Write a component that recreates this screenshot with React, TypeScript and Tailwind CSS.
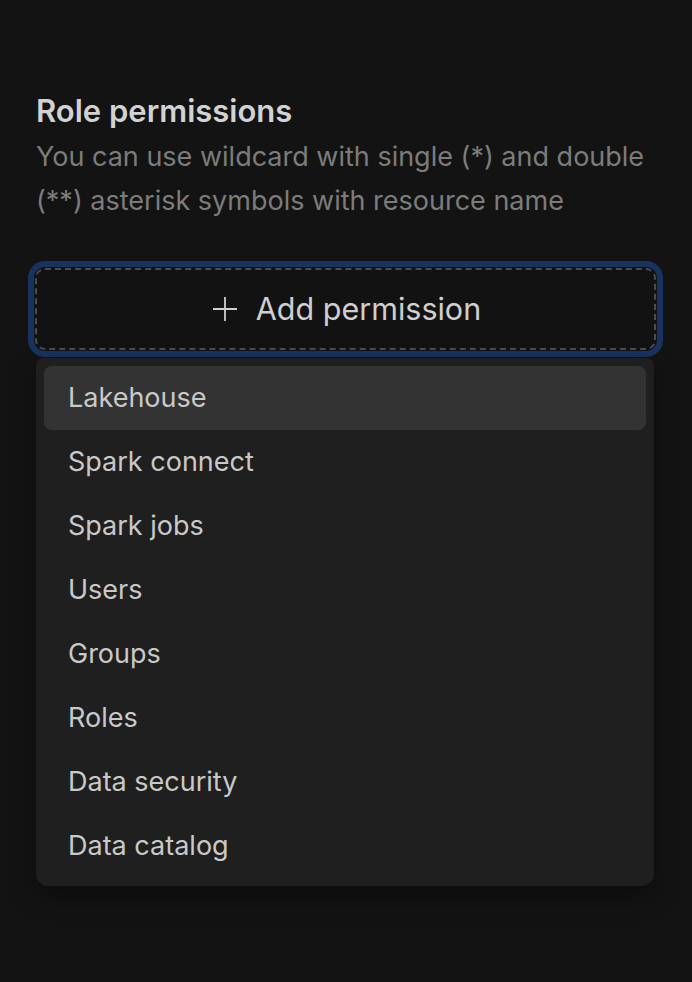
import React from 'react';

const items = [
  'Lakehouse',
  'Spark connect',
  'Spark jobs',
  'Users',
  'Groups',
  'Roles',
  'Data security',
  'Data catalog',
];

const App: React.FC = () => {
  return (
    <div className="min-h-[982px] w-full bg-[#131313] px-9 pt-[88px] font-['Inter',sans-serif]">
      <h2 className="text-[31px] leading-[46px] font-semibold text-[#d2d2d2]">Role permissions</h2>
      <p className="mt-px text-[27px] leading-[44px] text-[#7c7c7c]">
        You can use wildcard with single (*) and double (**) asterisk symbols with resource name
      </p>

      <div className="mt-[45px]">
        <button
          type="button"
          className="flex h-[82px] w-[621px] -ml-px items-center justify-center gap-[19px] rounded-[10px] border-2 border-dashed border-[#4c4c4c] bg-[#121212] pl-[3px] text-[#cfcfcf] outline-[6px] outline-solid outline-[#183360] outline-offset-[1px]"
        >
          <svg width="24" height="24" viewBox="0 0 24 24" fill="none" stroke="currentColor" strokeWidth="1.8">
            <path d="M12 0v24M0 12h24" />
          </svg>
          <span className="text-[30.5px]">Add permission</span>
        </button>

        <div className="relative z-10 mt-2 w-[618px] rounded-b-[12px] rounded-t-[8px] bg-[#1f1f1f] p-2 shadow-[0_10px_24px_rgba(0,0,0,0.35)]">
          {items.map((item, i) => (
            <div
              key={item}
              className={`flex h-16 items-center rounded-[8px] px-6 text-[27px] text-[#c9c9c9] ${i === 0 ? 'bg-[#333333]' : ''}`}
            >
              {item}
            </div>
          ))}
        </div>
      </div>
    </div>
  );
};

export default App;
